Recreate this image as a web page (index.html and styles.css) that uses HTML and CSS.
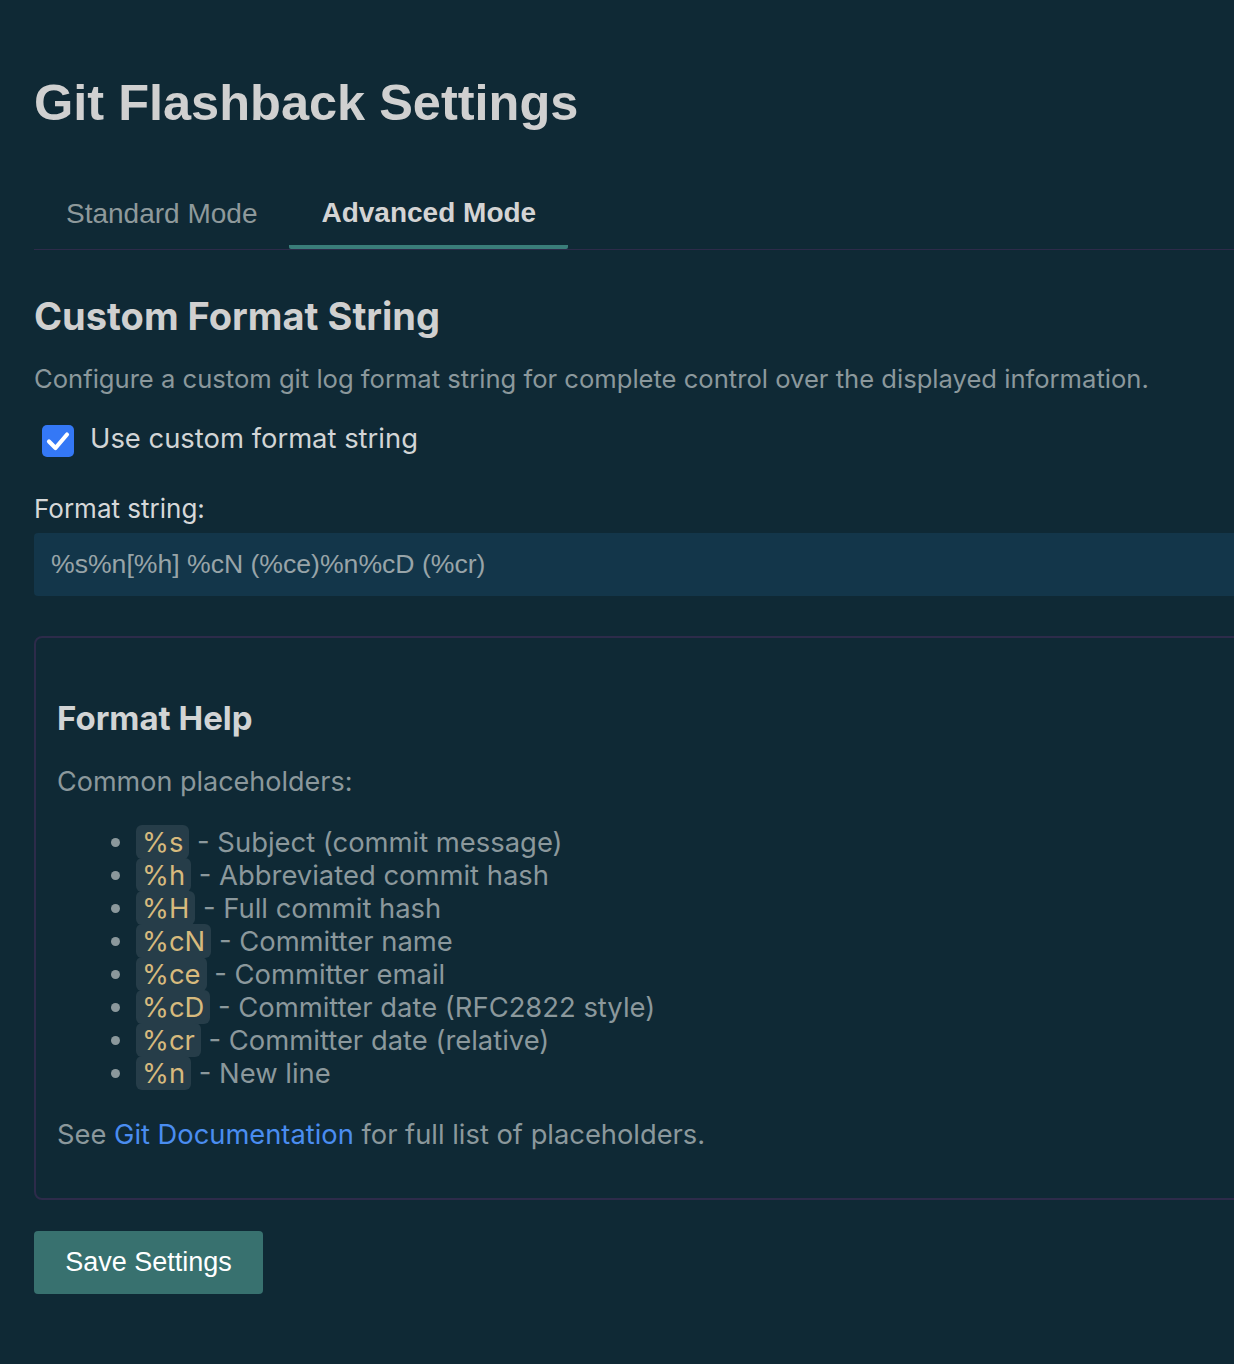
FILE: index.html
```html
<!DOCTYPE html>
<html lang="en">
<head>
<meta charset="utf-8">
<title>Git Flashback Settings</title>
<link rel="stylesheet" href="styles.css">
</head>
<body>
<main class="page">
  <h1 class="title">Git Flashback Settings</h1>
  <nav class="tabs">
    <div class="tab">Standard Mode</div>
    <div class="tab tab-active">Advanced Mode</div>
  </nav>
  <section class="panel">
    <h2 class="section-title">Custom Format String</h2>
    <p class="desc">Configure a custom git log format string for complete control over the displayed information.</p>
    <label class="check-row">
      <span class="checkbox"><svg viewBox="0 0 32 32" width="32" height="32"><path d="M7 16.5 L13.5 23 L25 9.5" fill="none" stroke="#fff" stroke-width="4.2" stroke-linecap="round" stroke-linejoin="round"/></svg></span>
      <span class="check-label">Use custom format string</span>
    </label>
    <div class="field-label">Format string:</div>
    <div class="input">%s%n[%h] %cN (%ce)%n%cD (%cr)</div>
    <div class="help">
      <h3 class="help-title">Format Help</h3>
      <p class="help-sub">Common placeholders:</p>
      <ul class="list">
        <li><code>%s</code> - Subject (commit message)</li>
        <li><code>%h</code> - Abbreviated commit hash</li>
        <li><code>%H</code> - Full commit hash</li>
        <li><code>%cN</code> - Committer name</li>
        <li><code>%ce</code> - Committer email</li>
        <li><code>%cD</code> - Committer date (RFC2822 style)</li>
        <li><code>%cr</code> - Committer date (relative)</li>
        <li><code>%n</code> - New line</li>
      </ul>
      <p class="see">See <a class="link" href="#">Git Documentation</a> for full list of placeholders.</p>
    </div>
    <button class="save">Save Settings</button>
  </section>
</main>
</body>
</html>
```
FILE: styles.css
```css
html, body {
  margin: 0;
  padding: 0;
  background: #0f2935;
  overflow: hidden;
}
body {
  font-family: Inter, "Noto Sans", sans-serif;
  color: #cfd3d5;
}
.page {
  width: 1300px;
  padding: 73px 0 0 34px;
  box-sizing: border-box;
}
.title {
  margin: 0;
  font-family: "Liberation Sans", Arial, sans-serif;
  font-weight: 700;
  font-size: 50.5px;
  line-height: 60px;
  color: #d0d0d0;
}
.tabs {
  display: flex;
  margin-top: 52px;
  border-bottom: 1px solid #2d2b4a;
}
.tab {
  font-family: "Liberation Sans", Arial, sans-serif;
  font-size: 28px;
  line-height: 30px;
  padding: 14px 32px 16px;
  border-bottom: 4px solid transparent;
  color: #8e999b;
}
.tab-active {
  font-weight: 700;
  color: #d4d4d4;
  border-bottom-color: #3a7d7a;
  border-radius: 2px;
  padding-top: 13px;
  padding-bottom: 17px;
}
.section-title {
  margin: 43px 0 0;
  font-size: 38px;
  line-height: 46px;
  font-weight: 700;
  color: #d0d0d0;
}
.desc {
  margin: 22px 0 0;
  font-size: 25.6px;
  line-height: 36px;
  color: #8b989c;
}
.check-row {
  display: flex;
  align-items: flex-start;
  gap: 16px;
  height: 32px;
  margin: 28px 0 0 8px;
}
.checkbox {
  width: 32px;
  height: 32px;
  border-radius: 5px;
  background: #3478f6;
  display: flex;
}
.check-label {
  font-size: 27.4px;
  line-height: 26px;
  color: #d2d5d6;
}
.field-label {
  margin-top: 36px;
  font-size: 26px;
  line-height: 32px;
  color: #d6d8d9;
}
.input {
  margin-top: 8px;
  height: 63px;
  box-sizing: border-box;
  padding: 0 17px;
  display: flex;
  align-items: center;
  background: #13364a;
  border-radius: 4px;
  font-family: "Liberation Sans", Arial, sans-serif;
  font-size: 26.6px;
  color: #98a4a8;
}
.help {
  margin-top: 40px;
  border: 2px solid #2d2b4a;
  border-radius: 8px;
  padding: 60px 21px 45px;
}
.help-title {
  margin: 0;
  font-size: 33px;
  line-height: 40px;
  font-weight: 700;
  color: #d2d4d5;
}
.help-sub {
  margin: 26px 0 0;
  font-size: 27px;
  line-height: 36px;
  color: #8b989c;
}
.list {
  margin: 26px 0 0;
  padding-left: 79px;
  font-size: 27.4px;
  line-height: 33px;
  color: #8b989c;
}
.list li::marker {
  color: #8b989c;
}
code {
  font-family: Inter, "Noto Sans", sans-serif;
  color: #d7ba7d;
  background: #263d49;
  border-radius: 6px;
  padding: 0 6px;
}
.see {
  margin: 27px 0 0;
  font-size: 27.3px;
  line-height: 36px;
  color: #8b989c;
}
.link {
  color: #4a8df0;
  text-decoration: none;
}
.save {
  margin-top: 31px;
  width: 229px;
  height: 63px;
  border: none;
  border-radius: 4px;
  background: #38716f;
  color: #ffffff;
  font-family: "Liberation Sans", Arial, sans-serif;
  font-size: 27px;
  cursor: pointer;
}
```
